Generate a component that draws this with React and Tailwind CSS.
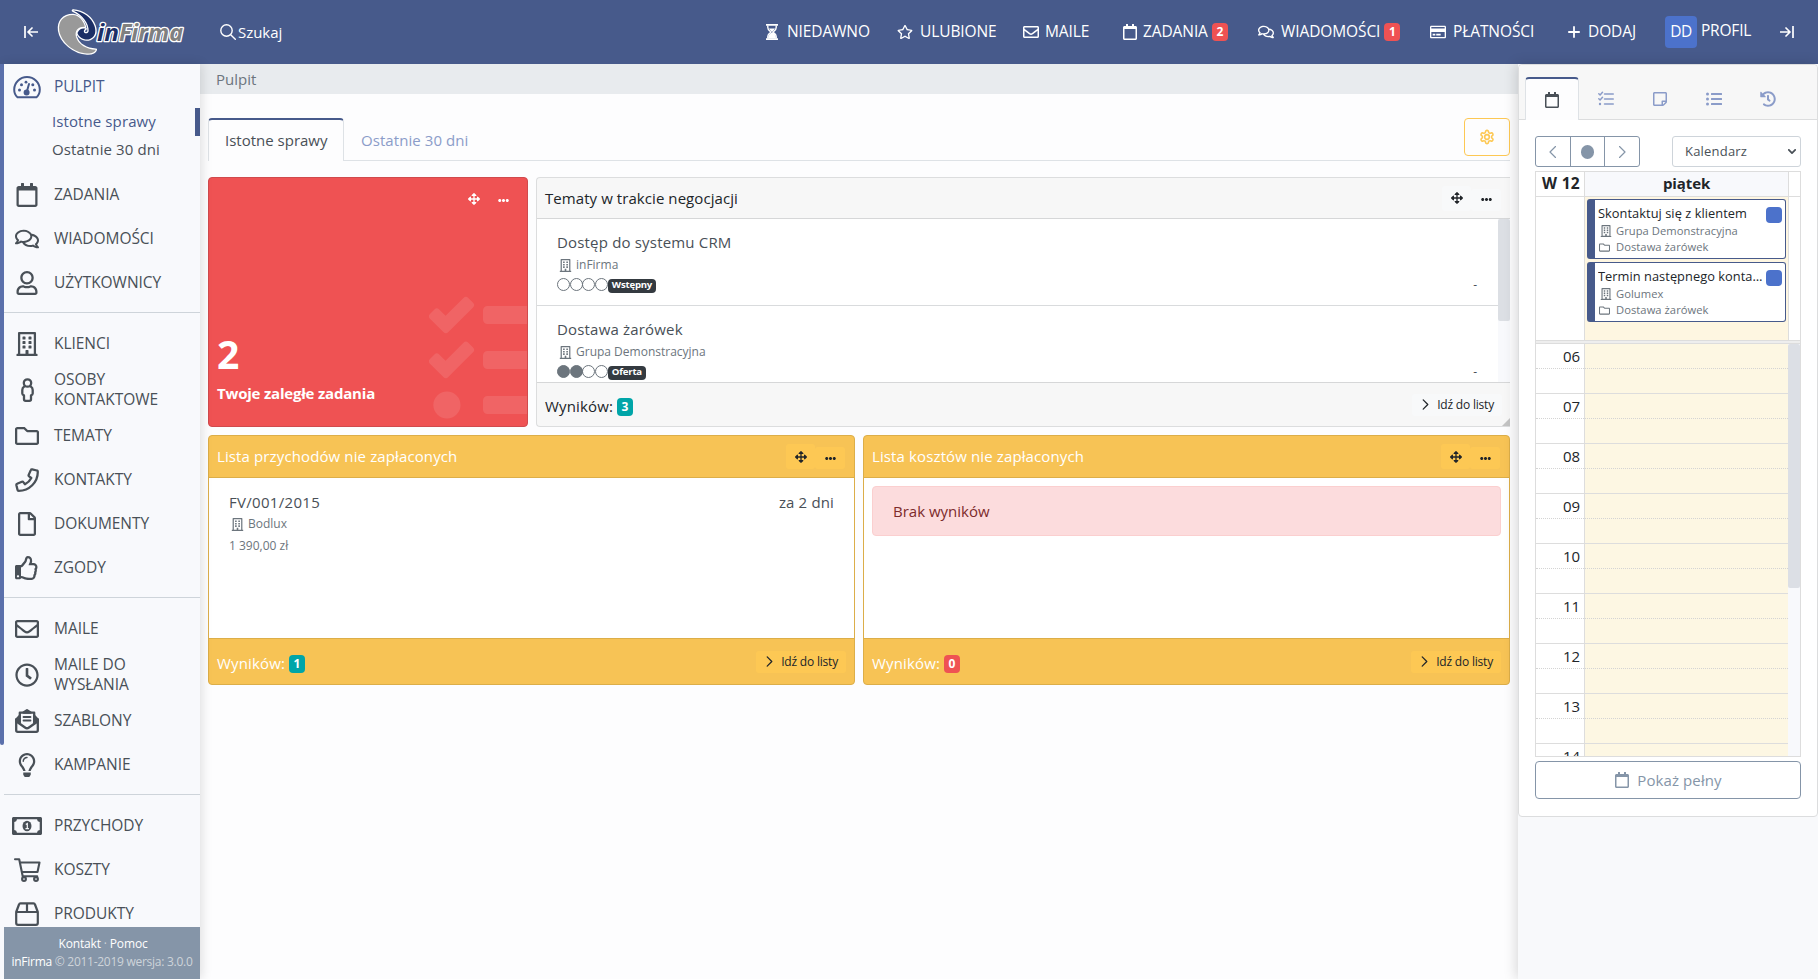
import { useState } from "react"
import {
  FaArrowsAlt,
  FaEllipsisH,
  FaHistory,
  FaListUl,
  FaRegBuilding,
  FaRegCalendar,
  FaRegClock,
  FaRegComments,
  FaRegCreditCard,
  FaRegEnvelope,
  FaRegFile,
  FaRegFolder,
  FaRegLightbulb,
  FaRegStar,
  FaRegStickyNote,
  FaRegThumbsUp,
  FaRegUser,
  FaTasks,
} from "react-icons/fa"

// outline icons that the free set does not have
function Line({ w = 24, h = 24, sw = 2, className, children }) {
  return (
    <svg
      viewBox={`0 0 ${w} ${h}`}
      fill="none"
      stroke="currentColor"
      strokeWidth={sw}
      strokeLinecap="round"
      strokeLinejoin="round"
      className={className}
    >
      {children}
    </svg>
  )
}

const Gauge = () => (
  <Line w={28} h={24} sw={2} className="h-6 w-7">
    <path d="M4.500 22.300C2.400 20.500 1.200 17.500 1.200 14.500a12.800 12.500 0 0 1 25.600 0c0 3-1.200 6-3.300 7.800z" />
    <path d="M13.600 17.500 16 9" />
    <circle cx="13.600" cy="17.500" r="2" fill="currentColor" />
    <g fill="currentColor" stroke="none">
      <circle cx="6.500" cy="15" r="1.500" />
      <circle cx="8.500" cy="9.800" r="1.500" />
      <circle cx="13" cy="7.200" r="1.400" />
      <circle cx="19.800" cy="9.800" r="1.500" />
      <circle cx="21.500" cy="15" r="1.500" />
    </g>
  </Line>
)

const Person = () => (
  <Line w={13} h={24} sw={2.3} className="h-6 w-[13px]">
    <circle cx="6.500" cy="5" r="3.700" />
    <path d="M3.200 8.500C1.600 9.500 1.300 10.500 1.300 12v3.500c0 1 .9 1.600 1.700 1.900v3.800c0 .9.700 1.600 1.600 1.600h3.800c.9 0 1.600-.7 1.600-1.600v-3.800c.8-.3 1.700-.9 1.700-1.900V12c0-1.500-.3-2.500-1.900-3.500" />
  </Line>
)

const Phone = () => (
  <Line sw={2.3} className="h-6 w-6">
    <path d="M17.200 1.400 21.800 2.500c.6.100 1 .6 1 1.200C22.800 14.300 14.300 22.800 3.700 22.800c-.6 0-1.100-.4-1.200-1L1.400 17.200c-.1-.6.2-1.200.7-1.400l4.800-2.100c.5-.2 1.100-.1 1.400.4l1.700 2.200c2.800-1.400 4.900-3.500 6.300-6.300l-2.200-1.700c-.5-.3-.6-.9-.4-1.400l2.100-4.800c.2-.5.800-.8 1.400-.7z" />
  </Line>
)

const OpenLetter = () => (
  <Line sw={2.300} className="h-6 w-6">
    <path d="M1.200 10.500v10.800c0 .8.600 1.500 1.500 1.500h18.600c.9 0 1.500-.7 1.500-1.500V10.500" />
    <path d="M1.500 12.500 10 18.500c1.300 1 2.700 1 4 0l8.500-6M4.800 14V3.700h14.400V14" />
    <path d="M1.200 10.500 4.500 7v6zM22.800 10.500 19.500 7v6zM8.500 3.500 12 1.200l3.500 2.300z" fill="currentColor" />
    <path d="M8.500 8h7M8.500 11.500h7" strokeWidth="1.800" />
  </Line>
)

const Banknote = () => (
  <svg viewBox="0 0 30 18" fill="currentColor" className="h-[18px] w-[30px]">
    <path
      fillRule="evenodd"
      d="M1.500 0h27C29.300 0 30 .7 30 1.500v15c0 .8-.7 1.500-1.500 1.500h-27C.7 18 0 17.300 0 16.500v-15C0 .7.7 0 1.500 0zM5 2.300A3 3 0 0 1 2.300 5v8A3 3 0 0 1 5 15.700h20a3 3 0 0 1 2.700-2.700V5A3 3 0 0 1 25 2.300z"
    />
    <ellipse cx="15" cy="9" rx="4.500" ry="5.200" />
    <path d="M13.800 7.500 15.300 6.500V11.500M13.500 11.700h3.400" stroke="#f8f9fc" strokeWidth="1.200" fill="none" />
  </svg>
)

const Cart = () => (
  <Line w={27} h={24} sw={2.100} className="h-6 w-[27px]">
    <path d="M1 1.200h4.200l3.500 17h14.500M6 4.500h19.500l-2 9.500H8" />
    <circle cx="10" cy="21" r="1.900" />
    <circle cx="22" cy="21" r="1.900" />
  </Line>
)

const Box = () => (
  <Line sw={2.200} className="h-6 w-6">
    <path d="M1.200 10 4 2.500c.2-.7.800-1.200 1.500-1.200h13c.7 0 1.300.5 1.500 1.200L22.800 10v11c0 1-.8 1.800-1.800 1.800H3c-1 0-1.800-.8-1.800-1.800zM1.500 10h21M12 1.500V10" />
  </Line>
)

const Hourglass = () => (
  <svg viewBox="0 0 12 16" className="h-4 w-3" fill="currentColor">
    <path d="M0 0h12v1.700H0zM0 14.300h12V16H0z" />
    <path d="M1.800 1.500v2C1.800 6 4 6.800 4.800 8 4 9.200 1.800 10 1.800 12.500v2M10.200 1.500v2C10.200 6 8 6.800 7.200 8c.8 1.200 3 2 3 4.500v2" fill="none" stroke="currentColor" strokeWidth="1.400" />
    <path d="M2 14.500C2 11 4 9.500 6 8.500s4 2.500 4 6zM3 4.500h6L6.800 7.500H5.200z" />
  </svg>
)

const Gear = () => (
  <Line sw={2.400} className="h-4 w-4">
    <path d="M12.220 2h-.44a2 2 0 0 0-2 2v.180a2 2 0 0 1-1 1.730l-.43.250a2 2 0 0 1-2 0l-.150-.080a2 2 0 0 0-2.730.730l-.220.380a2 2 0 0 0 .730 2.730l.150.100a2 2 0 0 1 1 1.720v.510a2 2 0 0 1-1 1.740l-.150.090a2 2 0 0 0-.730 2.730l.220.380a2 2 0 0 0 2.730.730l.150-.080a2 2 0 0 1 2 0l.430.250a2 2 0 0 1 1 1.730V20a2 2 0 0 0 2 2h.440a2 2 0 0 0 2-2v-.180a2 2 0 0 1 1-1.730l.430-.250a2 2 0 0 1 2 0l.150.080a2 2 0 0 0 2.730-.730l.220-.390a2 2 0 0 0-.730-2.730l-.150-.080a2 2 0 0 1-1-1.740v-.500a2 2 0 0 1 1-1.740l.150-.090a2 2 0 0 0 .730-2.730l-.220-.380a2 2 0 0 0-2.730-.730l-.150.080a2 2 0 0 1-2 0l-.430-.250a2 2 0 0 1-1-1.730V4a2 2 0 0 0-2-2z" />
    <circle cx="12" cy="12" r="3.500" />
  </Line>
)

const ThinTasks = () => (
  <Line w={16} h={16} sw={1.500} className="h-4 w-4">
    <path d="M6.500 3H15.300M6.500 8H15.300M6.500 13H15.300M.8 2.800 2.100 4 4.500 1.300M.8 7.800 2.100 9 4.500 6.300" />
    <circle cx="2" cy="13" r="1.200" fill="currentColor" stroke="none" />
  </Line>
)

const Logo = () => (
  <svg viewBox="56 6 130 52" className="h-[52px] w-[130px]">
    <g stroke="#ffffff" strokeWidth="2.600" strokeLinejoin="round" style={{ paintOrder: "stroke" }}>
      <path
        fill="#999999"
        d="M73 15C63 15 58 22 59.200 30.500 61 42 74 53 87 53.500c4.500.2 8-1.200 8.800-3.800-9-.2-17.500-5-19.800-12.700C74.500 31 77.500 26.500 85 26.800 83 20 79 15.500 73 15z"
      />
      <path
        fill="#1c2f66"
        d="M73 10.500c10 .8 18.500 7 21.500 15.500 2 6 .5 10.800-4.500 13-4.800 1.700-11-.8-12.500-6 1.500-3.600 4.500-5 8-4.200-1.600 1-2.200 2.400-1.200 3.900 1.700 1.300 4 .6 4.400-1.700C89 23.500 83 15 73 10.500z"
      />
      <g fontFamily="Open Sans, sans-serif" fontStyle="italic" fontWeight="700" fontSize="23">
        <text x="97" y="40.500" fill="#1c2f66" textLength="22" lengthAdjust="spacingAndGlyphs">in</text>
        <text x="119" y="40.500" fill="#808080" textLength="64" lengthAdjust="spacingAndGlyphs">Firma</text>
      </g>
    </g>
  </svg>
)

const menu = [
  [
    ["ZADANIA", FaRegCalendar],
    ["WIADOMOŚCI", FaRegComments],
    ["UŻYTKOWNICY", FaRegUser],
  ],
  [
    ["KLIENCI", FaRegBuilding],
    ["OSOBY KONTAKTOWE", Person, true],
    ["TEMATY", FaRegFolder],
    ["KONTAKTY", Phone],
    ["DOKUMENTY", FaRegFile],
    ["ZGODY", FaRegThumbsUp],
  ],
  [
    ["MAILE", FaRegEnvelope],
    ["MAILE DO WYSŁANIA", FaRegClock, true],
    ["SZABLONY", OpenLetter],
    ["KAMPANIE", FaRegLightbulb],
  ],
  [
    ["PRZYCHODY", Banknote],
    ["KOSZTY", Cart],
    ["PRODUKTY", Box],
  ],
]

function MenuItem({ label, icon: Icon, tall, active }) {
  return (
    <div className={`flex shrink-0 items-center ${tall ? "h-12" : "h-11"} ${active ? "text-[#475a8b]" : "text-[#495057]"}`}>
      <div className="flex w-[46px] justify-center pt-0.5">
        <Icon className="h-6 w-auto" />
      </div>
      <span className="ml-1 w-[112px] pb-px text-[15.5px] leading-5 tracking-[-0.05px]">{label}</span>
    </div>
  )
}

function Sidebar() {
  return (
    <aside className="relative z-10 flex w-[200px] shrink-0 bg-[#f8f9fc] shadow-[2px_0_10px_rgba(0,0,0,0.12)]">
      <div className="h-[681px] w-1 rounded-b-sm bg-[#5b70ab]" />
      <div className="flex w-[196px] flex-col">
        <nav className="flex h-[863px] flex-col overflow-hidden">
          <MenuItem label="PULPIT" icon={Gauge} active />
          <div className="mb-2 text-[15px] leading-[27px] tracking-[0.1px]">
            <div className="h-7 border-r-[5px] border-[#475a8b] pl-12 text-[#475a8b]">Istotne sprawy</div>
            <div className="h-7 pl-12 text-[#495057]">Ostatnie 30 dni</div>
          </div>
          {menu.map((group, i) => (
            <div key={i} className={i > 0 ? "mt-2 border-t border-[#ced4da] pt-2" : ""}>
              {group.map(([label, icon, tall]) => (
                <MenuItem key={label} label={label} icon={icon} tall={tall} />
              ))}
            </div>
          ))}
        </nav>
        <div className="h-[52px] bg-[#8595a8] pt-2 text-center text-[12px] leading-[18px] tracking-[-0.27px] whitespace-nowrap text-[#ced4da]">
          <div className="pl-0.5 tracking-[-0.15px]">
            <span className="text-white">Kontakt</span> · <span className="text-white">Pomoc</span>
          </div>
          <div>
            <span className="text-white">inFirma</span> © 2011-2019 wersja: 3.0.0
          </div>
        </div>
      </div>
    </aside>
  )
}

const Badge = ({ color, children }) => (
  <span className={`inline-flex h-[18px] min-w-4 items-center justify-center rounded-[4px] px-1 text-[12px] font-bold text-white ${color}`}>
    {children}
  </span>
)

function TopItem({ width, pad, icon, label, count }) {
  return (
    <div className={`flex shrink-0 items-center ${width}`}>
      <span className={`flex shrink-0 ${pad}`}>{icon}</span>
      <span className="text-[15.5px] tracking-[-0.1px]">{label}</span>
      {count && (
        <span className="ml-1 flex">
          <Badge color="bg-[#ef5253]">{count}</Badge>
        </span>
      )}
    </div>
  )
}

function TopBar() {
  return (
    <header className="flex h-16 shrink-0 items-center bg-[#475a8b] pl-6 whitespace-nowrap text-white">
      <Line w={14} h={12} sw={1.700} className="h-3 w-3.5">
        <path d="M1 0v12M13.500 6H4.500M8 2 4 6l4 4" />
      </Line>
      <div className="ml-[18px] flex">
        <Logo />
      </div>
      <Line w={16} h={16} sw={1.400} className="ml-[34px] h-4 w-4">
        <circle cx="6.500" cy="6.500" r="5.700" />
        <path d="m10.700 10.700 4.600 4.600" />
      </Line>
      <span className="ml-0.5 text-[15px] tracking-[-0.05px]">Szukaj</span>
      <div className="ml-auto flex items-center pr-6">
        <TopItem width="w-[131px]" pad="w-[21px]" icon={<Hourglass />} label="NIEDAWNO" />
        <TopItem width="w-[126px]" pad="w-[23px]" icon={<FaRegStar className="h-4 w-auto" />} label="ULUBIONE" />
        <TopItem width="w-[99px]" pad="w-[22px]" icon={<FaRegEnvelope className="h-4 w-auto" />} label="MAILE" />
        <TopItem width="w-[136px]" pad="w-[21px]" icon={<FaRegCalendar className="h-4 w-auto" />} label="ZADANIA" count="2" />
        <TopItem width="w-[172px]" pad="w-[23px]" icon={<FaRegComments className="h-4 w-auto" />} label="WIADOMOŚCI" count="1" />
        <TopItem width="w-[138px]" pad="w-[23px]" icon={<FaRegCreditCard className="h-4 w-auto" />} label="PŁATNOŚCI" />
        <TopItem
          width="w-[97px]"
          pad="w-5"
          icon={
            <Line w={12} h={12} sw={1.800} className="h-3 w-3">
              <path d="M6 .9v10.200M.9 6h10.200" />
            </Line>
          }
          label="DODAJ"
        />
        <div className="flex w-[115px] items-center text-[15.5px]">
          <span className="mr-1 flex h-8 w-8 items-center justify-center rounded-[4px] bg-[#4c72cb] tracking-[-0.4px]">DD</span>
          <span className="pb-[3px] tracking-[-0.2px]">PROFIL</span>
        </div>
        <Line w={14} h={12} sw={1.700} className="h-3 w-3.5">
          <path d="M13 0v12M.5 6h9M6 2l4 4-4 4" />
        </Line>
      </div>
    </header>
  )
}

function Tools({ tone }) {
  const bg = tone === "yellow" ? "bg-[#fdc854]" : tone === "red" ? "" : "bg-[#f8f9fa]"
  return (
    <div className="mr-px ml-auto flex items-end">
      <span className={`flex h-[25px] w-[29px] items-center justify-center rounded-[3px] ${bg}`}>
        <FaArrowsAlt className="h-3 w-3" />
      </span>
      <span className={`flex h-[22px] w-[30px] items-center justify-center rounded-[3px] ${bg}`}>
        <FaEllipsisH className="h-[11px] w-[11px]" />
      </span>
    </div>
  )
}

function GoToList({ tone }) {
  return (
    <span
      className={`mb-[3px] ml-auto flex h-[22px] w-[90px] items-center justify-end rounded-[3px] pr-2 text-[12px] tracking-[-0.2px] text-[#212529] ${
        tone === "yellow" ? "bg-[#fdc854]" : "bg-[#f8f9fa]"
      }`}
    >
      <Line w={7} h={12} sw={1.400} className="mr-2 mb-0.5 h-[11px] w-[7px]">
        <path d="m1 1 5 5-5 5" />
      </Line>
      Idź do listy
    </span>
  )
}

const Company = ({ children }) => (
  <div className="flex h-[22px] items-center text-[12px] text-[#6c757d]">
    <FaRegBuilding className="mr-1 ml-[2px] h-[13px] w-auto" />
    {children}
  </div>
)

function Topic({ name, company, stage, filled }) {
  return (
    <div className="h-[87px] shrink-0 border-b border-[#d9dbdd] pt-3 pr-[21px] pl-5">
      <div className="h-[23px] text-[15px] leading-[23px] tracking-[0.18px] text-[#495057]">{name}</div>
      <Company>{company}</Company>
      <div className="flex h-[17px] items-center">
        {[0, 1, 2, 3].map((n) => (
          <span
            key={n}
            className={`mr-[-0.3px] h-[13px] w-[13px] rounded-full border border-[#6c757d] ${n < filled ? "bg-[#6c757d]" : ""}`}
          />
        ))}
        <span className="mt-0.5 flex h-3.5 items-center rounded-[4px] bg-[#343a40] px-1 text-[9.6px] font-bold tracking-[-0.2px] text-white">
          {stage}
        </span>
        <span className="ml-auto text-[12px] text-[#495057]">-</span>
      </div>
    </div>
  )
}

function YellowCard({ title, count, badge, children }) {
  return (
    <section className="flex h-[250px] flex-1 flex-col rounded-[4px] border border-[#dcae49] bg-[#f7c355] text-[15px]">
      <div className="flex h-[42px] items-center border-b border-[#dcae49] px-2 tracking-[0.12px] text-white">
        <span className="pb-px">{title}</span>
        <div className="ml-auto text-[#212529]">
          <Tools tone="yellow" />
        </div>
      </div>
      <div className="flex-1 bg-white">{children}</div>
      <div className="flex h-[46px] items-center border-t border-[#dcae49] px-2 pt-1 text-white">
        <span className="mr-1 tracking-[0.15px]">Wyników:</span>
        <Badge color={badge}>{count}</Badge>
        <GoToList tone="yellow" />
      </div>
    </section>
  )
}

function Dashboard() {
  return (
    <main className="flex flex-1 flex-col bg-[#fdfdfe] text-[15px]">
      <div className="h-[30px] bg-[#e8ebee] pl-4 leading-[31px] text-[#6c757d]">Pulpit</div>
      <div className="mx-2 mt-6 flex h-[43px] border-b border-[#dee2e6]">
        <div className="mb-[-1px] w-[136px] rounded-t-[4px] border-x border-t-2 border-x-[#dee2e6] border-t-[#475a8b] bg-[#fdfdfe] pl-4 leading-[41px] text-[#495057]">
          Istotne sprawy
        </div>
        <div className="pt-0.5 pl-[17px] leading-[41px] tracking-[0.07px] text-[#8b9cc9]">Ostatnie 30 dni</div>
        <div className="ml-auto flex h-[38px] w-[46px] items-center justify-center rounded-[4px] border border-[#fdc854] text-[#fdc854]">
          <Gear />
        </div>
      </div>

      <div className="mx-2 mt-4 flex gap-2">
        <section className="relative h-[250px] w-[320px] overflow-hidden rounded-[4px] border border-[#d04a4d] bg-[#ef5253] px-2 text-white">
          <FaTasks className="absolute top-[110px] left-[220px] h-36 w-36 opacity-10" />
          <div className="flex h-[42px] items-center">
            <Tools tone="red" />
          </div>
          <div className="mt-[107px] text-[39px] leading-[54px] font-bold">2</div>
          <div className="text-[15px] leading-6 font-bold tracking-[-0.2px]">Twoje zaległe zadania</div>
        </section>

        <section className="relative flex h-[250px] flex-1 flex-col overflow-hidden rounded-[4px] rounded-r-none border border-r-0 border-[#dcddde] bg-[#f7f7f7]">
          <div className="flex h-[41px] shrink-0 items-center border-b border-[#d6d7d8] pr-2 pl-2 tracking-[0.07px] text-[#212529]">
            Tematy w trakcie negocjacji
            <Tools />
          </div>
          <div className="flex h-[163px] shrink-0 overflow-hidden bg-white">
            <div className="flex flex-1 flex-col">
              <Topic name="Dostęp do systemu CRM" company="inFirma" stage="Wstępny" filled={0} />
              <Topic name="Dostawa żarówek" company="Grupa Demonstracyjna" stage="Oferta" filled={2} />
            </div>
            <div className="w-3 bg-[#f8f9fc]">
              <div className="h-[102px] rounded-[2px] bg-[#dcdfe4]" />
            </div>
          </div>
          <div className="flex flex-1 items-center border-t border-[#d6d7d8] px-2 pt-1 text-[#212529]">
            <span className="mr-1 tracking-[0.15px]">Wyników:</span>
            <Badge color="bg-[#00a5a8]">3</Badge>
            <GoToList />
          </div>
          <svg viewBox="0 0 8 8" className="absolute right-0 bottom-0 h-2 w-2 fill-[#c4c4c4]">
            <path d="M8 0v8H0z" />
          </svg>
        </section>
      </div>

      <div className="mx-2 mt-2 flex gap-2">
        <YellowCard title="Lista przychodów nie zapłaconych" count="1" badge="bg-[#00a5a8]">
          <div className="flex justify-between pt-3 pr-5 pl-5 text-[#495057]">
            <div>
              <div className="h-[23px] leading-6 tracking-[0.3px]">FV/001/2015</div>
              <Company>Bodlux</Company>
              <div className="text-[12px] leading-[22px] text-[#6c757d]">1 390,00 zł</div>
            </div>
            <div className="leading-6 tracking-[0.15px]">za 2 dni</div>
          </div>
        </YellowCard>
        <YellowCard title="Lista kosztów nie zapłaconych" count="0" badge="bg-[#ef5253]">
          <div className="mx-2 mt-2 h-[50px] rounded-[4px] border border-[#fbcfcf] bg-[#fcdcdd] pl-5 leading-[48px] text-[#7c2b2b]">
            Brak wyników
          </div>
        </YellowCard>
      </div>
    </main>
  )
}

function CalendarEvent({ title, company, topic }) {
  return (
    <div className="flex h-[60px] w-[199px] rounded-[3px] border border-l-8 border-[#475a8b] bg-white pt-[5px] pr-[3px] pl-[3px] text-[12px] whitespace-nowrap">
      <div className="min-w-0 flex-1">
        <div className="truncate text-[12.8px] leading-4 tracking-[0.05px] text-[#212529]">{title}</div>
        <div className="mt-0.5 flex items-center text-[11.200px] leading-4 tracking-[0.05px] text-[#6c757d]">
          <span className="flex w-[18px] pl-0.5">
            <FaRegBuilding className="h-3 w-auto" />
          </span>
          {company}
        </div>
        <div className="flex items-center text-[11.200px] leading-4 tracking-[0.05px] text-[#6c757d]">
          <span className="flex w-[18px] pl-px">
            <FaRegFolder className="h-[11px] w-auto" />
          </span>
          {topic}
        </div>
      </div>
      <span className="mt-0.5 ml-[3px] h-4 w-4 rounded-[4px] bg-[#4c72cb]" />
    </div>
  )
}

const hours = ["06", "07", "08", "09", "10", "11", "12", "13", "14"]

function RightPanel() {
  const [view, setView] = useState("Kalendarz")
  return (
    <aside className="relative z-10 w-[300px] shrink-0 bg-[#f8f9fb] shadow-[-2px_0_12px_rgba(0,0,0,0.15)]">
      <div className="h-[753px] rounded-[4px] border border-[#dcddde] bg-white">
        <div className="flex h-[55px] items-end rounded-t-[4px] border-b border-[#dcddde] bg-[#f7f7f7] pl-[6px] text-[#8b9cc9]">
          <div className="mb-[-1px] flex h-[43px] w-[54px] items-center justify-center rounded-t-[4px] border-x border-t-2 border-x-[#dee2e6] border-t-[#475a8b] bg-[#fdfdfe] text-[#495057]">
            <FaRegCalendar className="h-4 w-auto" />
          </div>
          <div className="flex h-[41px] w-[54px] items-center justify-center"><ThinTasks /></div>
          <div className="flex h-[41px] w-[54px] items-center justify-center"><FaRegStickyNote className="h-4 w-auto" /></div>
          <div className="flex h-[41px] w-[54px] items-center justify-center"><FaListUl className="h-4 w-auto" /></div>
          <div className="flex h-[41px] w-[54px] items-center justify-center"><FaHistory className="h-4 w-auto" /></div>
        </div>

        <div className="px-4 pt-4">
          <div className="flex justify-between">
            <div className="flex h-[31px] w-[105px] rounded-[3px] border border-[#8595a8] text-[#8595a8]">
              <span className="flex flex-1 items-center justify-center">
                <Line w={7} h={12} sw={1.200} className="h-3 w-[7px]">
                  <path d="M6.500.5 1 6l5.500 5.500" />
                </Line>
              </span>
              <span className="flex flex-1 items-center justify-center border-x border-[#8595a8]">
                <span className="h-3.5 w-[13px] rounded-full bg-[#8595a8]" />
              </span>
              <span className="flex flex-1 items-center justify-center">
                <Line w={7} h={12} sw={1.200} className="h-3 w-[7px]">
                  <path d="M.5.5 6 6 .5 11.500" />
                </Line>
              </span>
            </div>
            <button
              className="flex h-[31px] w-[129px] items-center justify-between rounded-[3px] border border-[#ced4da] pr-1 pl-3 text-[13px] tracking-[0.2px] text-[#495057]"
              onClick={() => setView("Kalendarz")}
            >
              {view}
              <Line w={8} h={6} sw={1.700} className="h-1.5 w-2">
                <path d="m.8.8 3.200 3.400L7.200.8" />
              </Line>
            </button>
          </div>

          <div className="mt-1 h-[586px] overflow-hidden border border-[#dddddd] text-[15px] text-[#212529]">
            <div className="flex h-[25px] border-b border-[#dddddd] font-bold">
              <div className="w-[49px] border-r border-[#dddddd] pr-1 text-right text-[15.5px] leading-[23px] tracking-[0.3px]">W 12</div>
              <div className="w-[204px] border-r border-[#dddddd] bg-[#f8f9fc] text-center leading-[23px] tracking-[-0.1px]">piątek</div>
            </div>
            <div className="flex h-[144px] border-b border-[#dddddd]">
              <div className="w-[49px] border-r border-[#dddddd]" />
              <div className="flex w-[204px] flex-col gap-[3px] border-r border-[#dddddd] bg-[#fef6e1] pt-0.5 pl-0.5">
                <CalendarEvent title="Skontaktuj się z klientem" company="Grupa Demonstracyjna" topic="Dostawa żarówek" />
                <CalendarEvent title="Termin następnego kontaktu" company="Golumex" topic="Dostawa żarówek" />
              </div>
            </div>
            <div className="h-[3px] border-b border-[#dddddd] bg-[#eeeeee]" />
            <div className="flex h-[414px]">
              <div className="w-[252px] overflow-hidden">
                {hours.map((hour) => (
                  <div key={hour} className="flex h-[50px] border-b border-[#dddddd]">
                    <div className="w-[49px] border-r border-[#dddddd]">
                      <div className="h-[25px] border-b border-dotted border-[#d4d4d4] pr-1 text-right leading-6 tracking-[-0.1px]">{hour}</div>
                    </div>
                    <div className="flex-1 bg-[#fdf7e3]">
                      <div className="h-[25px] border-b border-dotted border-[#d4d4d4]" />
                    </div>
                  </div>
                ))}
              </div>
              <div className="w-3 bg-[#f8f9fc]">
                <div className="h-[244px] rounded-[2px] bg-[#dcdfe5]" />
              </div>
            </div>
          </div>

          <div className="mt-1 flex h-[38px] items-center justify-center rounded-[4px] border border-[#8595a8] text-[15px] tracking-[0.1px] text-[#8595a8]">
            <FaRegCalendar className="mr-[7px] h-4 w-auto" />
            Pokaż pełny
          </div>
        </div>
      </div>
    </aside>
  )
}

export default function App() {
  return (
    <div className="flex h-[979px] w-[1818px] flex-col overflow-hidden bg-[#fdfdfe] font-['Open_Sans',sans-serif]">
      <TopBar />
      <div className="flex flex-1">
        <Sidebar />
        <Dashboard />
        <RightPanel />
      </div>
    </div>
  )
}
